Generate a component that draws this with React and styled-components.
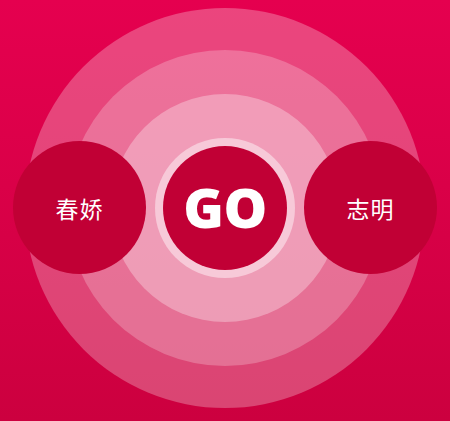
import styled, { createGlobalStyle } from "styled-components";

const Global = createGlobalStyle`
  html, body {
    margin: 0;
    padding: 0;
    background: #d8004a;
  }
  body {
    font-family: "Noto Sans CJK SC", "Noto Sans", sans-serif;
  }
`;

const Stage = styled.div`
  width: 450px;
  height: 421px;
  box-sizing: border-box;
  padding-bottom: 6px;
  display: grid;
  place-items: center;
  overflow: hidden;
  background: linear-gradient(180deg, #e5004f 0%, #cc003f 100%);

  & > * {
    grid-area: 1 / 1;
  }
`;

const Ring = styled.div`
  width: ${(p) => p.size}px;
  height: ${(p) => p.size}px;
  border-radius: 50%;
  background: rgba(255, 255, 255, ${(p) => p.alpha});
  display: flex;
  align-items: center;
  justify-content: center;
  flex-shrink: 0;
`;

const Row = styled.div`
  display: flex;
  align-items: center;
  justify-content: center;
  gap: 9px;
`;

const Halo = styled.div`
  width: 140px;
  height: 140px;
  border-radius: 50%;
  background: #f7c9d8;
  display: flex;
  align-items: center;
  justify-content: center;
`;

const GoButton = styled.button`
  width: 124px;
  height: 124px;
  border-radius: 50%;
  border: none;
  padding: 0 0 2px;
  background: #c10035;
  color: #fff;
  font-family: "Open Sans", "Liberation Sans", sans-serif;
  font-weight: 800;
  font-size: 55px;
  letter-spacing: -0.5px;
  line-height: 1;
  cursor: pointer;
`;

const Person = styled.div`
  width: 133px;
  height: 133px;
  border-radius: 50%;
  background: #c10035;
  color: #fff;
  display: flex;
  align-items: center;
  justify-content: center;
  font-family: "Noto Sans CJK SC", "Noto Sans", sans-serif;
  font-size: 23px;
  letter-spacing: 1px;
`;

export default function App() {
  return (
    <>
      <Global />
      <Stage>
        <Ring size={400} alpha={0.27}>
          <Ring size={316} alpha={0.23}>
            <Ring size={228} alpha={0.31} />
          </Ring>
        </Ring>
        <Row>
          <Person>春娇</Person>
          <Halo>
            <GoButton>GO</GoButton>
          </Halo>
          <Person>志明</Person>
        </Row>
      </Stage>
    </>
  );
}
